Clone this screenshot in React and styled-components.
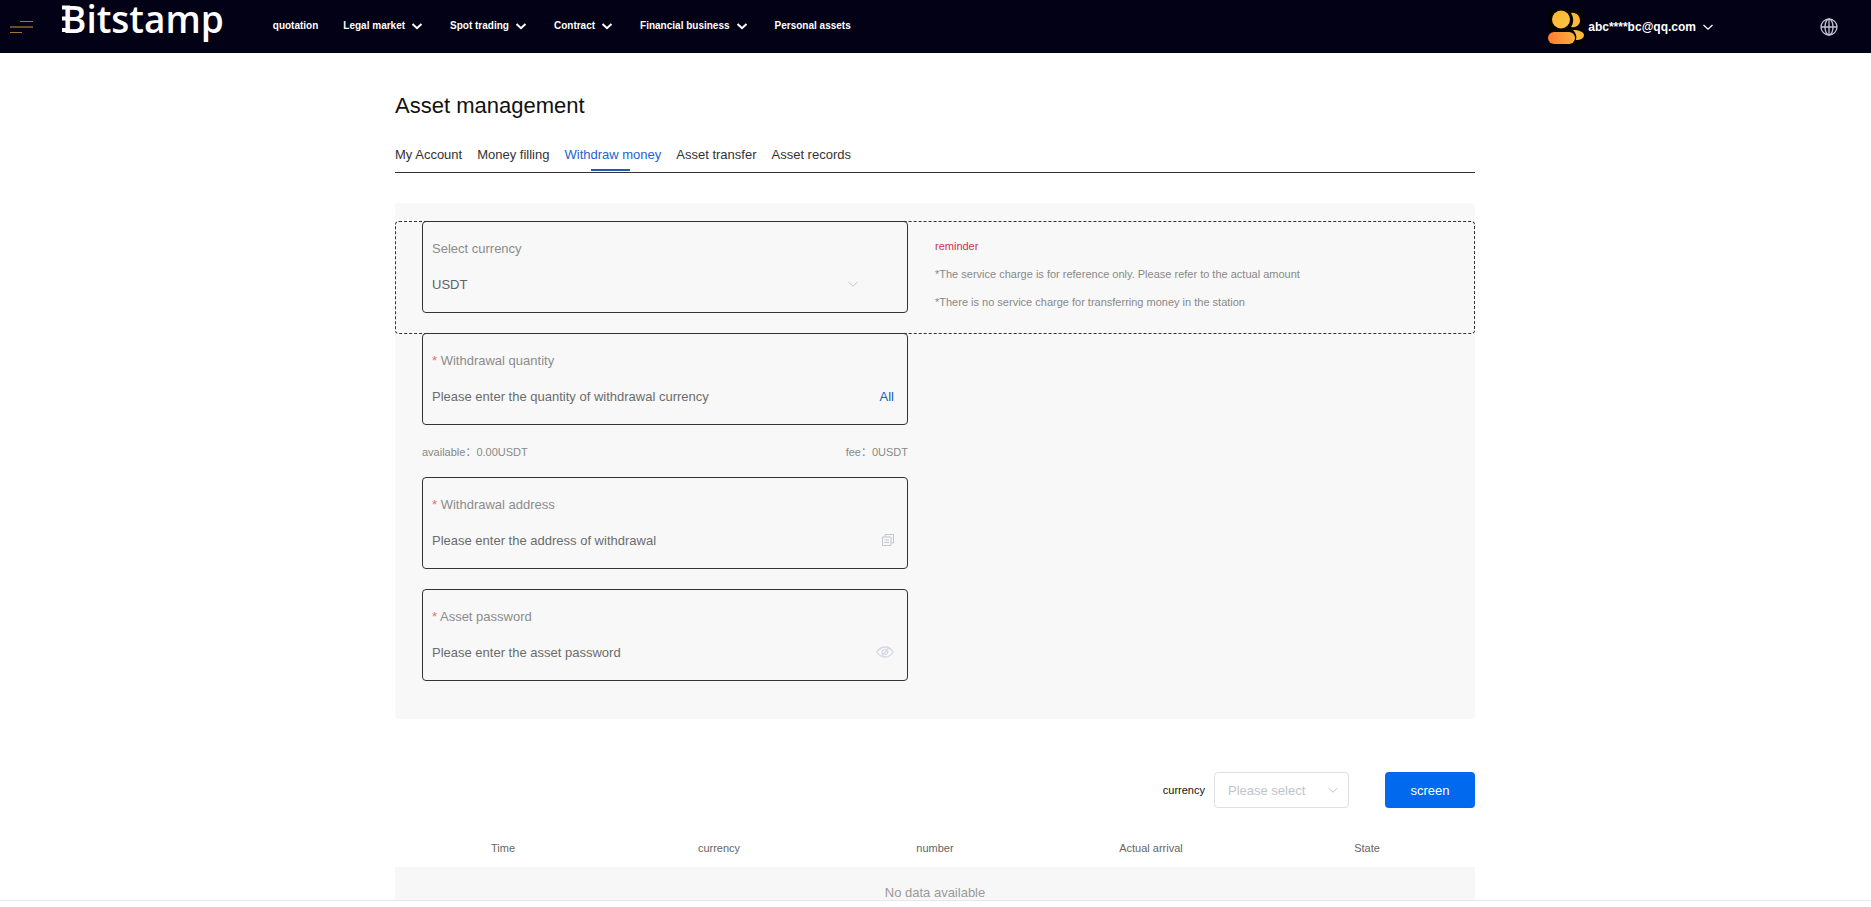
import React, { useState } from 'react';
import styled, { createGlobalStyle } from 'styled-components';

const GlobalStyle = createGlobalStyle`
  * {
    box-sizing: border-box;
  }
  body {
    margin: 0;
    background: #fff;
    color: #333;
    font-family: 'Liberation Sans', Arial, 'Noto Sans CJK SC', sans-serif;
    font-size: 13px;
  }
  button,
  input,
  select {
    font: inherit;
  }
`;

const Page = styled.div`
  display: flex;
  flex-direction: column;
  height: 100vh;
  overflow: hidden;
`;

const Header = styled.header`
  display: flex;
  flex: none;
  align-items: center;
  height: 53px;
  padding: 0 33px 0 10px;
  background: #020116;
  color: #fff;
`;

const PlainButton = styled.button`
  display: inline-flex;
  align-items: center;
  padding: 0;
  border: none;
  background: none;
  color: inherit;
  cursor: pointer;
`;

const Logo = styled.a`
  position: relative;
  margin: 0 49px 16px 29px;
  color: #fff;
  font-family: 'Open Sans', 'Noto Sans', sans-serif;
  font-size: 37px;
  font-weight: 600;
  line-height: 37px;
  text-decoration: none;
`;

const Spurs = styled.svg`
  position: absolute;
  top: 0;
  left: 0;
`;

const Nav = styled.nav`
  display: flex;
  align-items: center;
  gap: 25px;
  margin-bottom: 2px;
`;

const NavLink = styled.a`
  display: flex;
  align-items: center;
  gap: 4px;
  color: #fff;
  font-size: 10px;
  font-weight: bold;
  line-height: 16px;
  text-decoration: none;
`;

const User = styled(PlainButton)`
  gap: 4px;
  margin-left: auto;
  margin-right: 104px;
  font-size: 12px;
  font-weight: bold;
`;

const Scroll = styled.div`
  flex: 1;
  min-height: 0;
  padding-right: 1px;
  overflow: hidden;
`;

const Container = styled.main`
  width: 1080px;
  max-width: 100%;
  margin: 0 auto;
`;

const Title = styled.h1`
  margin: 0;
  padding-top: 39px;
  color: #111;
  font-size: 22px;
  font-weight: normal;
  line-height: 28px;
`;

const Tabs = styled.nav`
  display: flex;
  gap: 15px;
  margin-top: 25px;
  border-bottom: 1px solid #333;
`;

const Tab = styled.a`
  position: relative;
  height: 27px;
  color: ${({ $active }) => ($active ? '#2563d0' : '#333')};
  line-height: 20px;
  text-decoration: none;

  &::after {
    content: '';
    display: ${({ $active }) => ($active ? 'block' : 'none')};
    position: absolute;
    bottom: 1px;
    left: 50%;
    width: 39px;
    height: 2px;
    margin-left: -22px;
    background: #1a5fb4;
  }
`;

const Panel = styled.form`
  margin-top: 30px;
  padding: 18px 0 38px;
  border-radius: 4px;
  background: #f8f8f8;
`;

const CurrencyRow = styled.div`
  display: flex;
  height: 113px;
  padding: 0 26px;
  border: 1px dashed #333;
  border-radius: 4px;

  > div:first-child {
    margin-top: -1px;
  }
`;

const Fields = styled.div`
  display: flex;
  flex-direction: column;
  width: 45%;
  margin: -1px 0 0 27px;
`;

const Field = styled.div`
  display: flex;
  flex-direction: column;
  flex: none;
  width: ${({ $width }) => $width || 'auto'};
  height: 92px;
  margin-bottom: ${({ $gap }) => $gap || 0};
  padding: 9px 13px 9px 9px;
  border: 1px solid #333;
  border-radius: 4px;
`;

const FieldLabel = styled.label`
  color: #8c8c8c;
  line-height: 36px;
`;

const Required = styled.span`
  color: #f56c6c;
`;

const FieldRow = styled.div`
  display: flex;
  align-items: center;
  height: 34px;
`;

const FieldInput = styled.input`
  flex: 1;
  min-width: 0;
  height: 34px;
  padding: 0;
  border: none;
  outline: none;
  background: none;
  color: #555;

  &::placeholder {
    color: #6c6c6c;
    opacity: 1;
  }
`;

const AllButton = styled(PlainButton)`
  color: #2158c8;
`;

const SelectWrap = styled.div`
  display: grid;
  flex: none;
  align-items: center;
  width: ${({ $width }) => $width};

  > * {
    grid-area: 1 / 1;
  }
  > svg {
    justify-self: end;
    margin-right: 8px;
    pointer-events: none;
  }
`;

const FieldSelect = styled.select`
  height: 34px;
  padding: 0;
  border: none;
  outline: none;
  appearance: none;
  background: none;
  color: #606266;
`;

const Reminder = styled.div`
  padding: 10px 0 0 27px;
  color: #888;
  font-size: 11px;
  line-height: 28px;

  p {
    margin: 0;
  }
  p:first-child {
    color: #cc3350;
  }
`;

const Balance = styled.div`
  display: flex;
  justify-content: space-between;
  padding-top: 2px;
  color: #888;
  font-size: 11px;
  line-height: 50px;
`;

const FilterBar = styled.form`
  display: flex;
  align-items: center;
  justify-content: flex-end;
  margin-top: 53px;
`;

const FilterLabel = styled.label`
  margin-right: 9px;
  color: #111;
  font-size: 11px;
`;

const FilterSelect = styled(FieldSelect)`
  height: 36px;
  padding-left: 13px;
  border: 1px solid #dcdfe6;
  border-radius: 4px;
  background: #fff;
  color: #c0c4cc;
`;

const ScreenButton = styled.button`
  width: 90px;
  height: 36px;
  margin-left: 36px;
  border: none;
  border-radius: 4px;
  background: #0069ee;
  color: #fff;
  cursor: pointer;
`;

const Table = styled.table`
  width: 100%;
  margin-top: 20px;
  border-collapse: collapse;
  table-layout: fixed;
  text-align: center;

  th {
    height: 39px;
    padding: 0;
    color: #666;
    font-size: 11px;
    font-weight: normal;
  }
  td {
    height: 50px;
    padding: 0;
    background: #f7f7f7;
    color: #999;
  }
`;

const BottomStrip = styled.footer`
  flex: none;
  height: 7px;
  border-top: 1px solid #e8e8e8;
  background: #fff;
`;

const Chevron = ({ size = 16, color = '#fff', weight = 2 }) => (
  <svg width={size} height={size} viewBox="0 0 16 16" fill="none" stroke={color} strokeWidth={weight} aria-hidden="true">
    <path d="M3.500 6 8 10.200 12.500 6" />
  </svg>
);

const MenuIcon = () => (
  <svg width="23" height="14" viewBox="0 0 23 14" aria-hidden="true">
    <path d="M10 1.500h13" stroke="#a8743a" />
    <path d="M0 7h23" stroke="#6b4a2c" strokeWidth="2" />
    <path d="M0 12.500h12" stroke="#a8743a" />
  </svg>
);

const AvatarIcon = () => (
  <svg width="36" height="36" viewBox="0 0 36 36" aria-hidden="true">
    <defs>
      <linearGradient id="avatarHead" x1="0" y1="0" x2="1" y2="1">
        <stop offset="0" stopColor="#fdb52e" />
        <stop offset="1" stopColor="#ffc64d" />
      </linearGradient>
      <linearGradient id="avatarBody">
        <stop offset="0" stopColor="#ff7b2e" />
        <stop offset="1" stopColor="#ffb03f" />
      </linearGradient>
    </defs>
    <rect width="36" height="36" fill="#050302" />
    <path d="M23 4c5-1 9 3 9 7.500S28 19 23 18a12 12 0 0 0 0-14z" fill="#fdb93c" />
    <path d="M25 21c6 0 11 2 11 5 0 3-3 5-8 5 1-4 0-7-3-10z" fill="#fdb93c" />
    <circle cx="13" cy="10.500" r="9" fill="url(#avatarHead)" />
    <rect y="23" width="27" height="12" rx="6" fill="url(#avatarBody)" />
  </svg>
);

const GlobeIcon = () => (
  <svg width="18" height="18" viewBox="0 0 18 18" fill="none" stroke="#c4c4d4" strokeWidth="1.300" aria-hidden="true">
    <circle cx="9" cy="9" r="8" />
    <ellipse cx="9" cy="9" rx="4" ry="8" />
    <path d="M9 1v16M1 9h16" />
  </svg>
);

const CopyIcon = () => (
  <svg width="12" height="12" viewBox="0 0 12 12" fill="none" stroke="#c0c4cc" aria-hidden="true">
    <path d="M3 2.500V.5h8.500V9H9.500" />
    <path d="M.5 3h8.500v8.500H.5zM2.500 6h4.500M2.500 8.500h4.500" />
  </svg>
);

const EyeOffIcon = () => (
  <svg width="18" height="12" viewBox="0 0 18 12" fill="none" stroke="#d4d7e6" strokeWidth="1.300" aria-hidden="true">
    <path d="M.8 6C3 2.500 6 1 9 1s6 1.500 8.200 5C15 9.500 12 11 9 11S3 9.500.8 6z" />
    <path d="M6.500 8a3 3 0 0 1 3-4.500M11.500 4.500A3 3 0 0 1 9 8.700M5.500 10.500l7.500-9" />
  </svg>
);

const navItems = [
  { label: 'quotation' },
  { label: 'Legal market', menu: true },
  { label: 'Spot trading', menu: true },
  { label: 'Contract', menu: true },
  { label: 'Financial business', menu: true },
  { label: 'Personal assets' },
];

const tabs = ['My Account', 'Money filling', 'Withdraw money', 'Asset transfer', 'Asset records'];

const columns = ['Time', 'currency', 'number', 'Actual arrival', 'State'];

const InputField = ({ id, label, placeholder, type = 'text', gap, children }) => (
  <Field $gap={gap}>
    <FieldLabel htmlFor={id}>
      <Required>*</Required> {label}
    </FieldLabel>
    <FieldRow>
      <FieldInput id={id} type={type} placeholder={placeholder} />
      {children}
    </FieldRow>
  </Field>
);

const App = () => {
  const [activeTab, setActiveTab] = useState('Withdraw money');
  const [showPassword, setShowPassword] = useState(false);

  return (
    <Page>
      <GlobalStyle />
      <Header>
        <PlainButton type="button" aria-label="Menu">
          <MenuIcon />
        </PlainButton>
        <Logo href="#">
          Bitstamp
          <Spurs width="8" height="38" viewBox="0 0 8 38" stroke="#fff" strokeWidth="4" aria-hidden="true">
            <path d="M0 7.500h8M0 18.500h8M0 30h8" />
          </Spurs>
        </Logo>
        <Nav>
          {navItems.map(item => (
            <NavLink href="#" key={item.label}>
              {item.label}
              {item.menu && <Chevron />}
            </NavLink>
          ))}
        </Nav>
        <User type="button">
          <AvatarIcon />
          abc****bc@qq.com
          <Chevron weight={1.3} />
        </User>
        <PlainButton type="button" aria-label="Language">
          <GlobeIcon />
        </PlainButton>
      </Header>
      <Scroll>
        <Container>
          <Title>Asset management</Title>
          <Tabs>
            {tabs.map(tab => (
              <Tab href="#" key={tab} $active={tab === activeTab} onClick={() => setActiveTab(tab)}>
                {tab}
              </Tab>
            ))}
          </Tabs>
          <Panel onSubmit={e => e.preventDefault()}>
            <CurrencyRow>
              <Field $width="486px">
                <FieldLabel htmlFor="currency">Select currency</FieldLabel>
                <SelectWrap $width="437px">
                  <FieldSelect id="currency">
                    <option>USDT</option>
                  </FieldSelect>
                  <Chevron color="#c0c4cc" weight={1} />
                </SelectWrap>
              </Field>
              <Reminder>
                <p>reminder</p>
                <p>*The service charge is for reference only. Please refer to the actual amount</p>
                <p>*There is no service charge for transferring money in the station</p>
              </Reminder>
            </CurrencyRow>
            <Fields>
              <InputField
                id="quantity"
                label="Withdrawal quantity"
                placeholder="Please enter the quantity of withdrawal currency"
              >
                <AllButton type="button">All</AllButton>
              </InputField>
              <Balance>
                <span>available：0.00USDT</span>
                <span>fee：0USDT</span>
              </Balance>
              <InputField
                id="address"
                label="Withdrawal address"
                placeholder="Please enter the address of withdrawal"
                gap="20px"
              >
                <PlainButton type="button" aria-label="Paste address">
                  <CopyIcon />
                </PlainButton>
              </InputField>
              <InputField
                id="password"
                label="Asset password"
                placeholder="Please enter the asset password"
                type={showPassword ? 'text' : 'password'}
              >
                <PlainButton type="button" aria-label="Show password" onClick={() => setShowPassword(!showPassword)}>
                  <EyeOffIcon />
                </PlainButton>
              </InputField>
            </Fields>
          </Panel>
          <FilterBar onSubmit={e => e.preventDefault()}>
            <FilterLabel htmlFor="filter">currency</FilterLabel>
            <SelectWrap $width="135px">
              <FilterSelect id="filter">
                <option>Please select</option>
              </FilterSelect>
              <Chevron color="#c0c4cc" weight={1} />
            </SelectWrap>
            <ScreenButton type="submit">screen</ScreenButton>
          </FilterBar>
          <Table>
            <thead>
              <tr>
                {columns.map(column => (
                  <th key={column}>{column}</th>
                ))}
              </tr>
            </thead>
            <tbody>
              <tr>
                <td colSpan={columns.length}>No data available</td>
              </tr>
            </tbody>
          </Table>
        </Container>
      </Scroll>
      <BottomStrip />
    </Page>
  );
};

export default App;
